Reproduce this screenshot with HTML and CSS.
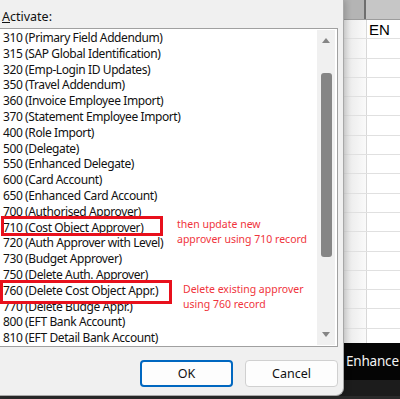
FILE: index.html
```html
<!DOCTYPE html>
<html lang="en">
<head>
    <meta charset="UTF-8">
    <title>Activate</title>
    <link rel="stylesheet" href="styles.css">
</head>
<body>
    <div class="screen">
        <div class="dialog">
            <div class="label"><u>A</u>ctivate:</div>
            <div class="listbox">
                <ul class="items">
                    <li>310 (Primary Field Addendum)</li>
                    <li>315 (SAP Global Identification)</li>
                    <li>320 (Emp-Login ID Updates)</li>
                    <li>350 (Travel Addendum)</li>
                    <li>360 (Invoice Employee Import)</li>
                    <li>370 (Statement Employee Import)</li>
                    <li>400 (Role Import)</li>
                    <li>500 (Delegate)</li>
                    <li>550 (Enhanced Delegate)</li>
                    <li>600 (Card Account)</li>
                    <li>650 (Enhanced Card Account)</li>
                    <li>700 (Authorised Approver)</li>
                    <li>710 (Cost Object Approver)</li>
                    <li>720 (Auth Approver with Level)</li>
                    <li>730 (Budget Approver)</li>
                    <li>750 (Delete Auth. Approver)</li>
                    <li>760 (Delete Cost Object Appr.)</li>
                    <li>770 (Delete Budge Appr.)</li>
                    <li>800 (EFT Bank Account)</li>
                    <li>810 (EFT Detail Bank Account)</li>
                </ul>
                <div class="scrollbar">
                    <span class="arrow up"></span>
                    <div class="track"><div class="thumb"></div></div>
                    <span class="arrow down"></span>
                </div>
                <div class="mark mark-710"></div>
                <div class="mark mark-760"></div>
                <div class="note note-710">then update new<br>approver using 710 record</div>
                <div class="note note-760">Delete existing approver<br>using 760 record</div>
            </div>
            <div class="buttons">
                <button class="btn default">OK</button>
                <button class="btn">Cancel</button>
            </div>
        </div>
        <div class="sheet">
            <div class="sheet-head">
                <div class="hcell narrow"></div>
                <div class="hcell"></div>
            </div>
            <div class="sheet-rows">
                <div class="row"><div class="cell narrow"></div><div class="cell">EN</div></div>
                <div class="row"><div class="cell narrow"></div><div class="cell"></div></div>
                <div class="row"><div class="cell narrow"></div><div class="cell"></div></div>
                <div class="row"><div class="cell narrow"></div><div class="cell"></div></div>
                <div class="row"><div class="cell narrow"></div><div class="cell"></div></div>
                <div class="row"><div class="cell narrow"></div><div class="cell"></div></div>
                <div class="row"><div class="cell narrow"></div><div class="cell"></div></div>
                <div class="row"><div class="cell narrow"></div><div class="cell"></div></div>
                <div class="row"><div class="cell narrow"></div><div class="cell"></div></div>
                <div class="row"><div class="cell narrow"></div><div class="cell"></div></div>
                <div class="row"><div class="cell narrow"></div><div class="cell"></div></div>
                <div class="row"><div class="cell narrow"></div><div class="cell"></div></div>
                <div class="row"><div class="cell narrow"></div><div class="cell"></div></div>
                <div class="row"><div class="cell narrow"></div><div class="cell"></div></div>
                <div class="row"><div class="cell narrow"></div><div class="cell"></div></div>
                <div class="row"><div class="cell narrow"></div><div class="cell"></div></div>
                <div class="row"><div class="cell narrow"></div><div class="cell"></div></div>
            </div>
            <div class="taskbar">Enhance</div>
        </div>
    </div>
    <div class="bottom-strip"></div>
</body>
</html>
```

FILE: styles.css
```css
body {
    margin: 0;
    width: 400px;
    height: 399px;
    overflow: hidden;
    background-color: #1c1c1c;
    font-family: "Noto Sans", "Open Sans", sans-serif;
}

.screen {
    display: flex;
    height: 396px;
}

.dialog {
    width: 344px;
    flex-shrink: 0;
    background-color: #f0f0f0;
    border-right: 1px solid #a8a8a8;
    border-bottom: 1px solid #a8a8a8;
    border-bottom-right-radius: 8px;
    box-sizing: border-box;
    position: relative;
    z-index: 1;
    box-shadow: 2px 0 6px rgba(0, 0, 0, 0.18);
}

.label {
    font-size: 12.5px;
    line-height: 16px;
    height: 20px;
    padding: 9px 0 0 2px;
    color: #111;
    box-sizing: border-box;
    margin-bottom: 8px;
}

.listbox {
    position: relative;
    display: flex;
    width: 338px;
    height: 319px;
    box-sizing: border-box;
    border: 1px solid #a0a0a0;
    border-left: none;
    background-color: #fff;
}

.items {
    list-style: none;
    margin: 0;
    padding: 1px 0 0 3px;
    flex: 1;
    font-size: 12px;
    letter-spacing: -0.4px;
    line-height: 15.8px;
    color: #111;
}

.items li {
    white-space: nowrap;
}

.scrollbar {
    width: 18px;
    margin: 1px 2px 1px 0;
    background-color: #f0f0f0;
    display: flex;
    flex-direction: column;
    align-items: center;
}

.arrow {
    width: 0;
    height: 0;
    border-left: 4px solid transparent;
    border-right: 4px solid transparent;
    margin: 8px 0;
}

.arrow.up {
    border-bottom: 5px solid #858585;
}

.arrow.down {
    border-top: 5px solid #858585;
}

.track {
    flex: 1;
    width: 100%;
    display: flex;
    justify-content: center;
}

.thumb {
    width: 11px;
    height: 184px;
    margin-top: 22px;
    border-radius: 3px;
    background-color: #858585;
}

.mark {
    position: absolute;
    border: 3px solid #e8101c;
    box-sizing: border-box;
}

.mark-710 {
    left: 1px;
    top: 187px;
    width: 162px;
    height: 20px;
}

.mark-760 {
    left: 0;
    top: 251px;
    width: 172px;
    height: 24px;
}

.note {
    position: absolute;
    font-size: 10.5px;
    line-height: 15px;
    color: #f0343c;
    white-space: nowrap;
}

.note-710 {
    left: 177px;
    top: 188px;
}

.note-760 {
    left: 183px;
    top: 253px;
}

.buttons {
    display: flex;
    justify-content: flex-end;
    gap: 12px;
    width: 338px;
    margin-top: 13px;
}

.btn {
    width: 93px;
    height: 27px;
    font-family: inherit;
    font-size: 12.5px;
    color: #111;
    background-color: #fdfdfd;
    border: 1px solid #d0d0d0;
    border-radius: 4px;
}

.btn.default {
    border: 2px solid #0067c0;
}

.sheet {
    flex: 1;
    display: flex;
    flex-direction: column;
    background-color: #1c1c1c;
    font-family: "Liberation Sans", sans-serif;
}

.sheet-head {
    display: flex;
    height: 20px;
    background-color: #c6c6c6;
    border-bottom: 1px solid #9c9c9c;
    box-sizing: border-box;
}

.hcell {
    flex: 1;
}

.hcell.narrow,
.cell.narrow {
    flex: 0 0 20px;
    border-right: 2px solid #6e6e6e;
}

.hcell.narrow {
    background-color: #b4b4b4;
}

.sheet-rows {
    height: 323px;
    overflow: hidden;
    background-color: #fff;
}

.row {
    display: flex;
    height: 19.3px;
    border-bottom: 1px solid #e0e0e0;
    box-sizing: border-box;
}

.cell {
    flex: 1;
    font-size: 15px;
    line-height: 19px;
    padding-left: 2px;
    color: #000;
}

.cell.narrow {
    border-right: 1px solid #d8d8d8;
    background: linear-gradient(to right, #e8e8e8, #fafafa);
}

.taskbar {
    height: 37px;
    background-color: #050505;
    color: #f4f4f4;
    font-family: "Noto Sans", sans-serif;
    font-size: 13.5px;
    letter-spacing: -0.2px;
    line-height: 37px;
    padding-left: 2px;
    white-space: nowrap;
    overflow: hidden;
}

.bottom-strip {
    height: 3px;
    background-color: #2a2a2a;
}
```
